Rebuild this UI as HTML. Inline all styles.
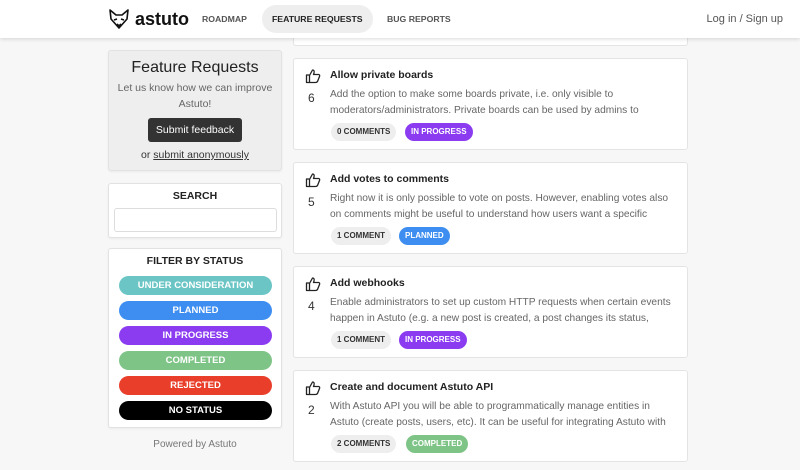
<!DOCTYPE html>
<html><head><style>
*{box-sizing:border-box;margin:0;padding:0}
body{width:800px;height:470px;overflow:hidden;background:#f7f7f7;font-family:"Liberation Sans",sans-serif;color:#222;position:relative}
.hdr{position:absolute;left:0;top:0;width:800px;height:38px;background:#fff;box-shadow:0 1px 4px rgba(0,0,0,.15);z-index:2}
.logo{position:absolute;left:108px;top:8px;display:flex;align-items:center;gap:5px;font-weight:bold;font-size:18px;color:#111}
.nav{position:absolute;top:5px;height:28px;line-height:28px;font-size:8.7px;font-weight:bold;color:#555;border-radius:14px;padding:0 10px}
.login{position:absolute;right:17px;top:13px;font-size:11px;color:#555}
.box{position:absolute;background:#fff;border:1px solid #e2e2e2;border-radius:3px;box-shadow:0 1px 2px rgba(0,0,0,.05)}
.pill{position:absolute;left:10px;width:153px;height:19px;border-radius:10px;color:#fff;font-size:9.5px;font-weight:bold;text-align:center;line-height:19px}
.card{position:absolute;left:293px;width:395px;height:92px;background:#fff;border:1px solid #e4e4e4;border-radius:3px}
.card h3{position:absolute;left:36px;top:10px;font-size:10.5px;font-weight:bold;color:#222}
.card .n{position:absolute;left:14px;top:32px;font-size:12px;color:#333}
.card p{position:absolute;left:36px;top:28px;width:350px;font-size:10.2px;line-height:16px;color:#666;height:32px;overflow:hidden}
.card .thumb{position:absolute;left:11px;top:9px}
.tag{position:absolute;top:64px;height:18px;line-height:18px;border-radius:9px;font-size:8px;font-weight:bold;padding:0 6px}
.c{background:#eee;color:#333;left:37px}
</style></head><body>
<div class="hdr">
 <div class="logo"><svg width="22" height="22" viewBox="0 0 22 22" fill="none" stroke="#111" stroke-width="1.6" stroke-linejoin="round"><path d="M2 2 L8 7 L14 7 L20 2 L19 11 L11 20 L3 11 Z"/><path d="M6 12 L9 11 M16 12 L13 11 M9 16 L11 18 L13 16"/></svg>astuto</div>
 <div class="nav" style="left:192px">ROADMAP</div>
 <div class="nav" style="left:262px;background:#eee;color:#222">FEATURE REQUESTS</div>
 <div class="nav" style="left:377px">BUG REPORTS</div>
 <div class="login">Log in / Sign up</div>
</div>
<div class="box" style="left:108px;top:50px;width:174px;height:121px;background:#eee;text-align:center">
 <div style="font-size:16px;margin-top:8px;color:#222">Feature Requests</div>
 <div style="font-size:10.5px;color:#666;line-height:16px;margin-top:3px">Let us know how we can improve<br>Astuto!</div>
 <div style="display:inline-block;background:#333;color:#fff;font-size:10.5px;padding:6px 8px;border-radius:3px;margin-top:6px">Submit feedback</div>
 <div style="font-size:10.5px;color:#333;margin-top:7px">or <u>submit anonymously</u></div>
</div>
<div class="box" style="left:108px;top:183px;width:174px;height:55px;text-align:center">
 <div style="font-size:10.5px;font-weight:bold;margin-top:6px">SEARCH</div>
 <div style="position:absolute;left:5px;top:24px;width:163px;height:24px;border:1px solid #ddd;border-radius:3px"></div>
</div>
<div class="box" style="left:108px;top:248px;width:174px;height:180px;text-align:center">
 <div style="font-size:10.5px;font-weight:bold;margin-top:6px">FILTER BY STATUS</div>
 <div class="pill" style="top:27px;background:#6cc5c5">UNDER CONSIDERATION</div>
 <div class="pill" style="top:52px;background:#3d8ef0">PLANNED</div>
 <div class="pill" style="top:77px;background:#8b3cf0">IN PROGRESS</div>
 <div class="pill" style="top:102px;background:#7fc487">COMPLETED</div>
 <div class="pill" style="top:127px;background:#e83e2a">REJECTED</div>
 <div class="pill" style="top:152px;background:#000">NO STATUS</div>
</div>
<div style="position:absolute;left:108px;top:439px;width:174px;text-align:center;font-size:10px;color:#777">Powered by Astuto</div>

<div class="card" style="top:-46px"></div>
<div class="card" style="top:58px"><svg class="thumb" width="16" height="16" viewBox="0 0 16 16" fill="none" stroke="#222" stroke-width="1.3" stroke-linejoin="round"><path d="M1.5 7h3v7.5h-3z M4.5 7.5 L7.5 2 C9 2 9.5 3 9 5 L8.5 6.5 H13.5 C14.5 6.5 15 7.5 14.5 8.5 L12.5 13.5 C12 14.3 11.5 14.5 10.5 14.5 H4.5"/></svg><h3>Allow private boards</h3><div class="n">6</div><p>Add the option to make some boards private, i.e. only visible to moderators/administrators. Private boards can be used by admins to</p><span class="tag c">0 COMMENTS</span><span class="tag" style="left:111px;background:#8b3cf0;color:#fff">IN PROGRESS</span></div>
<div class="card" style="top:162px"><svg class="thumb" width="16" height="16" viewBox="0 0 16 16" fill="none" stroke="#222" stroke-width="1.3" stroke-linejoin="round"><path d="M1.5 7h3v7.5h-3z M4.5 7.5 L7.5 2 C9 2 9.5 3 9 5 L8.5 6.5 H13.5 C14.5 6.5 15 7.5 14.5 8.5 L12.5 13.5 C12 14.3 11.5 14.5 10.5 14.5 H4.5"/></svg><h3>Add votes to comments</h3><div class="n">5</div><p>Right now it is only possible to vote on posts. However, enabling votes also on comments might be useful to understand how users want a specific</p><span class="tag c">1 COMMENT</span><span class="tag" style="left:105px;background:#3d8ef0;color:#fff">PLANNED</span></div>
<div class="card" style="top:266px"><svg class="thumb" width="16" height="16" viewBox="0 0 16 16" fill="none" stroke="#222" stroke-width="1.3" stroke-linejoin="round"><path d="M1.5 7h3v7.5h-3z M4.5 7.5 L7.5 2 C9 2 9.5 3 9 5 L8.5 6.5 H13.5 C14.5 6.5 15 7.5 14.5 8.5 L12.5 13.5 C12 14.3 11.5 14.5 10.5 14.5 H4.5"/></svg><h3>Add webhooks</h3><div class="n">4</div><p>Enable administrators to set up custom HTTP requests when certain events happen in Astuto (e.g. a new post is created, a post changes its status,</p><span class="tag c">1 COMMENT</span><span class="tag" style="left:105px;background:#8b3cf0;color:#fff">IN PROGRESS</span></div>
<div class="card" style="top:370px"><svg class="thumb" width="16" height="16" viewBox="0 0 16 16" fill="none" stroke="#222" stroke-width="1.3" stroke-linejoin="round"><path d="M1.5 7h3v7.5h-3z M4.5 7.5 L7.5 2 C9 2 9.5 3 9 5 L8.5 6.5 H13.5 C14.5 6.5 15 7.5 14.5 8.5 L12.5 13.5 C12 14.3 11.5 14.5 10.5 14.5 H4.5"/></svg><h3>Create and document Astuto API</h3><div class="n">2</div><p>With Astuto API you will be able to programmatically manage entities in Astuto (create posts, users, etc). It can be useful for integrating Astuto with</p><span class="tag c">2 COMMENTS</span><span class="tag" style="left:112px;background:#7fc487;color:#fff">COMPLETED</span></div>
</body></html>
